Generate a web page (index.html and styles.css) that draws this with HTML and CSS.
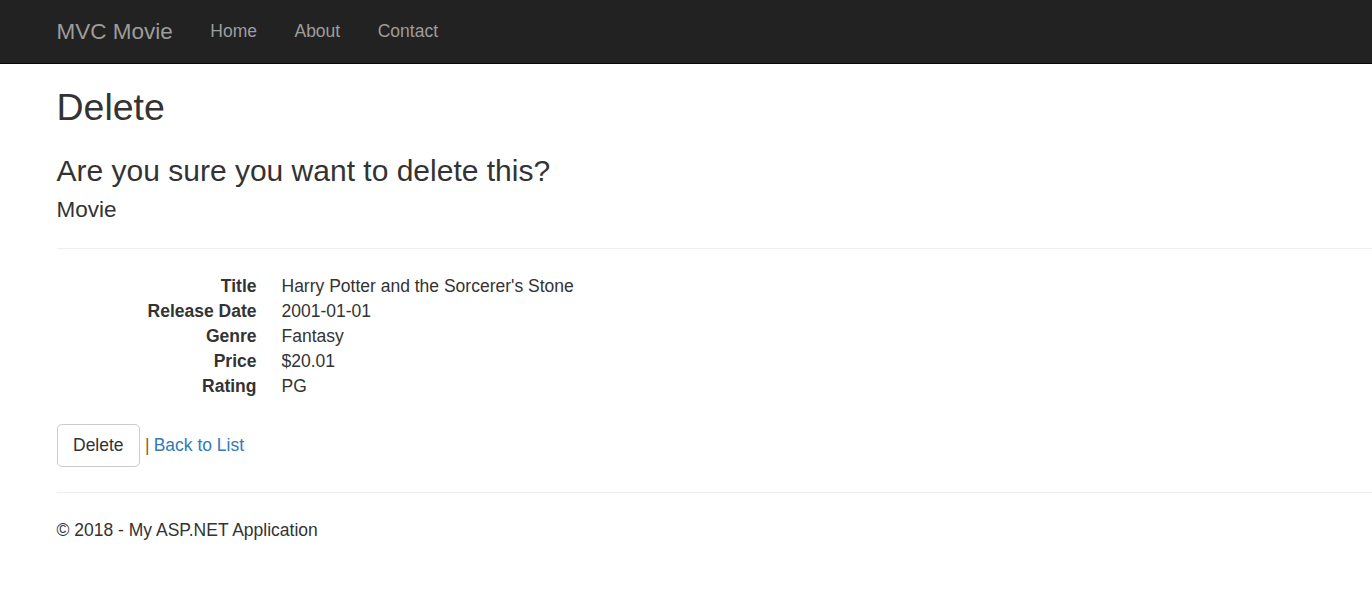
FILE: index.html
```html
<!DOCTYPE html>
<html lang="en">
<head>
<meta charset="utf-8">
<title>Delete - My ASP.NET Application</title>
<link rel="stylesheet" href="styles.css">
</head>
<body>
<header class="navbar">
  <div class="nav-inner">
    <a class="brand" href="#">MVC Movie</a>
    <nav class="nav-links">
      <a href="#">Home</a>
      <a href="#">About</a>
      <a href="#">Contact</a>
    </nav>
  </div>
</header>
<main class="body-content">
  <h2 class="title">Delete</h2>
  <h3 class="question">Are you sure you want to delete this?</h3>
  <div>
    <h4 class="entity">Movie</h4>
    <hr class="rule">
    <dl class="details">
      <dt>Title</dt><dd>Harry Potter and the Sorcerer's Stone</dd>
      <dt>Release Date</dt><dd>2001-01-01</dd>
      <dt>Genre</dt><dd>Fantasy</dd>
      <dt>Price</dt><dd>$20.01</dd>
      <dt>Rating</dt><dd>PG</dd>
    </dl>
    <form class="actions">
      <button type="button" class="btn">Delete</button>
      <span class="sep">|</span>
      <a class="link" href="#">Back to List</a>
    </form>
  </div>
  <hr class="rule">
  <footer class="footer">
    <p>&copy; 2018 - My ASP.NET Application</p>
  </footer>
</main>
</body>
</html>
```

FILE: styles.css
```css
* { box-sizing: border-box; }

html, body {
  margin: 0;
  padding: 0;
  background: #fff;
}

body {
  font-family: "Liberation Sans", Arial, Helvetica, sans-serif;
  font-size: 17.5px;
  line-height: 25px;
  color: #333;
  overflow: hidden;
}

.navbar {
  height: 63.5px;
  background: #222;
  border-bottom: 1.25px solid #080808;
}

.nav-inner {
  display: flex;
  align-items: center;
  padding-left: 56.5px;
  height: 62.25px;
}

.brand {
  font-size: 22.5px;
  line-height: 25px;
  color: #9d9d9d;
  text-decoration: none;
  padding: 18.75px 18.75px 18.75px 0;
}

.nav-links {
  display: flex;
}

.nav-links a {
  color: #9d9d9d;
  text-decoration: none;
  font-size: 17.5px;
  line-height: 25px;
  padding: 18.75px;
}

.body-content {
  padding-left: 56.5px;
  margin-top: -2px;
}

.title {
  font-size: 37.5px;
  font-weight: 500;
  line-height: 1.1;
  margin: 25px 0 12.5px;
}

.question {
  font-size: 30px;
  font-weight: 500;
  line-height: 1.1;
  margin: 26px 0 11.5px;
}

.entity {
  font-size: 22.5px;
  font-weight: 500;
  line-height: 1.1;
  margin: 11.5px 0 12.5px;
}

.rule {
  margin: 25px 0;
  border: 0;
  border-top: 1.25px solid #eee;
  height: 0;
}

.details {
  display: grid;
  grid-template-columns: 200px 1fr;
  column-gap: 25px;
  margin: 0 0 25px;
}

.details dt {
  font-weight: bold;
  text-align: right;
  white-space: nowrap;
}

.details dd {
  margin: 0;
}

.actions {
  display: flex;
  align-items: center;
  margin: 0;
  height: 42.5px;
}

.btn {
  font-family: inherit;
  font-size: 17.5px;
  line-height: 25px;
  color: #333;
  background: #fff;
  border: 1.25px solid #ccc;
  border-radius: 5px;
  padding: 7.5px 15.5px;
  height: 42.5px;
  cursor: pointer;
}

.sep {
  color: #8a5a2e;
  margin: 0 4px 0 5px;
}

.link {
  color: #337ab7;
  text-decoration: none;
}

.footer p {
  margin: 0 0 12.5px;
}
```
